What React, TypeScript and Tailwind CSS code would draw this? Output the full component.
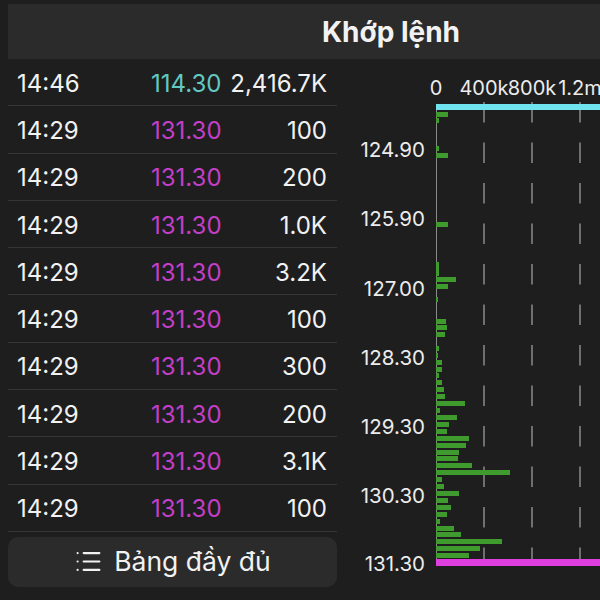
import { List } from "lucide-react";

type Trade = { time: string; price: string; vol: string; up?: boolean };

const TRADES: Trade[] = [
  { time: "14:46", price: "114.30", vol: "2,416.7K", up: true },
  { time: "14:29", price: "131.30", vol: "100" },
  { time: "14:29", price: "131.30", vol: "200" },
  { time: "14:29", price: "131.30", vol: "1.0K" },
  { time: "14:29", price: "131.30", vol: "3.2K" },
  { time: "14:29", price: "131.30", vol: "100" },
  { time: "14:29", price: "131.30", vol: "300" },
  { time: "14:29", price: "131.30", vol: "200" },
  { time: "14:29", price: "131.30", vol: "3.1K" },
  { time: "14:29", price: "131.30", vol: "100" },
];

// [top y, width] in page pixels
const BARS: [number, number][] = [
  [112, 12], [118, 3], [146, 3], [153, 12], [222, 12],
  [262, 3], [267, 3], [271, 3], [277, 20], [284, 12], [297, 2],
  [319, 10], [325, 11], [332, 9], [346, 3], [353, 2], [360, 6],
  [367, 6], [373, 3], [380, 6], [387, 8], [394, 9], [401, 29],
  [408, 4], [415, 21], [422, 13], [429, 11], [436, 33], [443, 30],
  [450, 23], [456, 22], [463, 36], [470, 74], [477, 6], [484, 8],
  [491, 23], [498, 12], [505, 15], [512, 11], [519, 4], [526, 18],
  [532, 25], [539, 66], [546, 44], [553, 33],
];

const Y_LABELS: [string, number][] = [
  ["124.90", 149], ["125.90", 218], ["127.00", 288], ["128.30", 357],
  ["129.30", 426], ["130.30", 495], ["131.30", 563],
];

const X_LABELS: [string, number][] = [["0", 436], ["400k", 484], ["800k", 532], ["1.2m", 580]];

function VolumeChart() {
  return (
    <svg width={263} height={541} className="block" style={{ fontFamily: "Inter, 'Liberation Sans', sans-serif" }}>
      <g transform="translate(-337,-59)">
        {X_LABELS.map(([t, x]) => (
          <text key={t} x={x} y={95} textAnchor="middle" fontSize={20} fill="#ececec">{t}</text>
        ))}
        {[484, 532, 580].map((x) => (
          <line key={x} x1={x} y1={102} x2={x} y2={560} stroke="#8a8a8a" strokeWidth={1.5} strokeDasharray="20.5 20" />
        ))}
        <line x1={436.5} y1={104} x2={436.5} y2={566} stroke="#8a8a8a" strokeWidth={1} />
        {BARS.map(([y, w]) => (
          <rect key={y} x={436} y={y} width={w} height={5} fill="#3f9b2d" />
        ))}
        <rect x={436} y={104} width={170} height={6} fill="#6fe4ee" />
        <rect x={436} y={559} width={170} height={7} fill="#e03fe0" />
        {Y_LABELS.map(([t, y]) => (
          <text key={t} x={425} y={y + 7.5} textAnchor="end" fontSize={20.5} fill="#ececec">{t}</text>
        ))}
      </g>
    </svg>
  );
}

export default function App() {
  return (
    <div
      className="w-[600px] h-[600px] overflow-hidden bg-[#1e1e1f] text-[#f2f2f2]"
      style={{ fontFamily: "Inter, 'Liberation Sans', sans-serif" }}
    >
      <div className="mt-1 ml-2 flex h-[55px] w-[766px] items-center justify-center bg-[#2b2b2c] text-[28px] font-bold">
        Khớp lệnh
      </div>
      <div className="flex">
        <div className="ml-2 w-[329px] shrink-0">
          {TRADES.map((t, i) => (
            <div key={i} className="flex h-[47.3px] items-center border-b border-[#353537] pt-[3px] text-[24px]">
              <span className="w-[143px] shrink-0 pl-[9px]">{t.time}</span>
              <span className={`flex-1 ${t.up ? "text-[#62c8c2]" : "text-[#c33fc8]"}`}>{t.price}</span>
              <span className="pr-[10px] text-right">{t.vol}</span>
            </div>
          ))}
          <button
            type="button"
            className="mt-[5px] flex h-[50px] w-full items-center justify-center gap-[11px] rounded-[10px] bg-[#2b2b2c] text-[26.5px] text-[#f2f2f2]"
          >
            <List className="h-[29px] w-[29px]" strokeWidth={1.8} />
            Bảng đầy đủ
          </button>
        </div>
        <VolumeChart />
      </div>
    </div>
  );
}
